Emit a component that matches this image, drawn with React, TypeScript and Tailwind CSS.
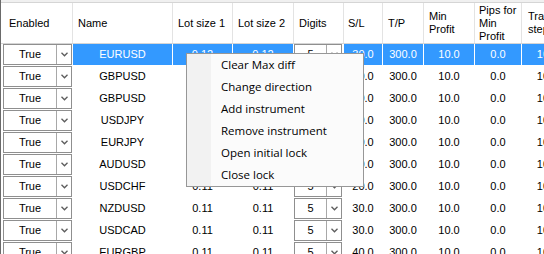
const columns = [
  { key: 'enabled', title: 'Enabled', width: 'w-[72px]', pad: 'pl-[8px]' },
  { key: 'name', title: 'Name', width: 'w-[100px]', pad: 'pl-[5px]' },
  { key: 'lot1', title: 'Lot size 1', width: 'w-[60px]', pad: 'pl-[5px]' },
  { key: 'lot2', title: 'Lot size 2', width: 'w-[61px]', pad: 'pl-[5px]' },
  { key: 'digits', title: 'Digits', width: 'w-[50px]', pad: 'pl-[5px]' },
  { key: 'sl', title: 'S/L', width: 'w-[39px]', pad: 'pl-[4px]' },
  { key: 'tp', title: 'T/P', width: 'w-[41px]', pad: 'pl-[5px]' },
  { key: 'minProfit', title: 'Min\nProfit', width: 'w-[51px]', pad: 'pl-[5px]' },
  { key: 'pips', title: 'Pips for\nMin\nProfit', width: 'w-[47px]', pad: 'pl-[4px]' },
  { key: 'trail', title: 'Trail\nstep', width: 'w-[52px]', pad: 'pl-[6px]' },
];

const rows = [
  { name: 'EURUSD', lot: '0.12', sl: '30.0', selected: true },
  { name: 'GBPUSD', lot: '0.11', sl: '30.0' },
  { name: 'GBPUSD', lot: '0.11', sl: '30.0' },
  { name: 'USDJPY', lot: '0.11', sl: '30.0' },
  { name: 'EURJPY', lot: '0.11', sl: '30.0' },
  { name: 'AUDUSD', lot: '0.11', sl: '30.0' },
  { name: 'USDCHF', lot: '0.11', sl: '20.0' },
  { name: 'NZDUSD', lot: '0.11', sl: '30.0' },
  { name: 'USDCAD', lot: '0.11', sl: '30.0' },
  { name: 'EURGBP', lot: '0.11', sl: '40.0' },
];

const menuItems = [
  'Clear Max diff',
  'Change direction',
  'Add instrument',
  'Remove instrument',
  'Open initial lock',
  'Close lock',
];

function Chevron() {
  return (
    <svg width="7" height="5" viewBox="0 0 7 5">
      <polyline points="0.5,0.8 3.5,3.8 6.5,0.8" fill="none" stroke="#5c5c5c" strokeWidth="1.3" />
    </svg>
  );
}

function Combo({ value, width }: { value: string; width: string }) {
  return (
    <div className={`${width} h-[21px] flex border border-[#8f8f8f] bg-white text-black`}>
      <div className="flex-1 flex items-center justify-center">{value}</div>
      <div className="w-[15px] border-l border-[#a8a8a8] flex items-center justify-center">
        <Chevron />
      </div>
    </div>
  );
}

export default function App() {
  return (
    <div className="w-[544px] h-[254px] overflow-hidden bg-white border-l border-[#6a6a6a] relative font-['Liberation_Sans',Arial,sans-serif] text-[11px] text-black">
      {/* top strip */}
      <div className="h-[2px] bg-[#f0f0f0]"></div>

      {/* Header */}
      <div className="flex h-[42px] border-t border-b border-[#d5d5d5] bg-white">
        {columns.map((col) => (
          <div
            key={col.key}
            className={`${col.width} ${col.pad} shrink-0 flex items-center border-r border-[#e3e3e3] leading-[13px] whitespace-pre`}
          >
            {col.title}
          </div>
        ))}
      </div>

      {/* Rows */}
      {rows.map((row, idx) => {
        const cell = row.selected ? 'bg-[#3399ff] text-white' : 'bg-white';
        return (
          <div key={idx} className="flex h-[22px] border-b border-white">
            <div className="w-[72px] shrink-0 border-r border-white flex items-start pl-[2px]">
              <Combo value="True" width="w-[69px]" />
            </div>
            <div className={`w-[100px] shrink-0 border-r border-white flex items-center justify-center ${cell}`}>{row.name}</div>
            <div className={`w-[60px] shrink-0 border-r border-white flex items-center justify-center ${cell}`}>{row.lot}</div>
            <div className={`w-[61px] shrink-0 border-r border-white flex items-center justify-center ${cell}`}>{row.lot}</div>
            <div className="w-[50px] shrink-0 border-r border-white flex items-start">
              <Combo value="5" width="w-[48px]" />
            </div>
            <div className={`w-[39px] shrink-0 border-r border-white flex items-center justify-center ${cell}`}>{row.sl}</div>
            <div className={`w-[41px] shrink-0 border-r border-white flex items-center justify-center ${cell}`}>300.0</div>
            <div className={`w-[51px] shrink-0 border-r border-white flex items-center justify-center ${cell}`}>10.0</div>
            <div className={`w-[47px] shrink-0 border-r border-white flex items-center justify-center ${cell}`}>0.0</div>
            <div className={`w-[52px] shrink-0 border-r border-white flex items-center justify-center ${cell}`}>10.0</div>
          </div>
        );
      })}

      {/* Context menu */}
      <div className="absolute left-[185px] top-[53px] w-[178px] h-[134px] border border-[#979797] bg-[#fbfbfb] flex font-['Open_Sans',sans-serif] text-[11.5px] text-black">
        <div className="w-[24px] bg-[#f2f2f2]"></div>
        <div className="flex-1 flex flex-col">
          {menuItems.map((item) => (
            <div key={item} className="h-[22px] flex items-center pl-[10px]">
              {item}
            </div>
          ))}
        </div>
      </div>
    </div>
  );
}
